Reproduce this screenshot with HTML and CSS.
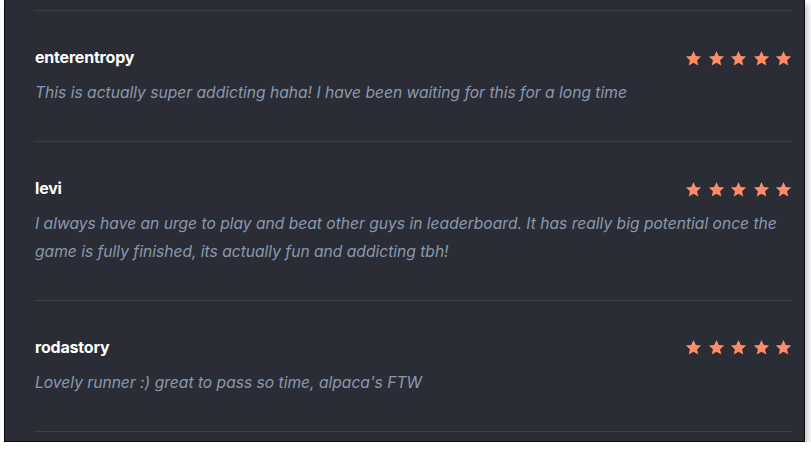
FILE: index.html
```html
<!DOCTYPE html>
<html>
<head>
<meta charset="utf-8">
<link rel="stylesheet" href="styles.css">
</head>
<body>
<div class="card">
  <div class="review">
    <div class="head">
      <span class="name">enterentropy</span>
      <span class="stars">
        <svg viewBox="0 0 24 24"><path d="M12 1.5l3.2 7 7.6.7-5.8 5.1 1.8 7.6L12 17.9l-6.8 4 1.8-7.6-5.8-5.1 7.6-.7z"/></svg>
        <svg viewBox="0 0 24 24"><path d="M12 1.5l3.2 7 7.6.7-5.8 5.1 1.8 7.6L12 17.9l-6.8 4 1.8-7.6-5.8-5.1 7.6-.7z"/></svg>
        <svg viewBox="0 0 24 24"><path d="M12 1.5l3.2 7 7.6.7-5.8 5.1 1.8 7.6L12 17.9l-6.8 4 1.8-7.6-5.8-5.1 7.6-.7z"/></svg>
        <svg viewBox="0 0 24 24"><path d="M12 1.5l3.2 7 7.6.7-5.8 5.1 1.8 7.6L12 17.9l-6.8 4 1.8-7.6-5.8-5.1 7.6-.7z"/></svg>
        <svg viewBox="0 0 24 24"><path d="M12 1.5l3.2 7 7.6.7-5.8 5.1 1.8 7.6L12 17.9l-6.8 4 1.8-7.6-5.8-5.1 7.6-.7z"/></svg>
      </span>
    </div>
    <p class="text">This is actually super addicting haha! I have been waiting for this for a long time</p>
  </div>
  <div class="review">
    <div class="head">
      <span class="name">levi</span>
      <span class="stars">
        <svg viewBox="0 0 24 24"><path d="M12 1.5l3.2 7 7.6.7-5.8 5.1 1.8 7.6L12 17.9l-6.8 4 1.8-7.6-5.8-5.1 7.6-.7z"/></svg>
        <svg viewBox="0 0 24 24"><path d="M12 1.5l3.2 7 7.6.7-5.8 5.1 1.8 7.6L12 17.9l-6.8 4 1.8-7.6-5.8-5.1 7.6-.7z"/></svg>
        <svg viewBox="0 0 24 24"><path d="M12 1.5l3.2 7 7.6.7-5.8 5.1 1.8 7.6L12 17.9l-6.8 4 1.8-7.6-5.8-5.1 7.6-.7z"/></svg>
        <svg viewBox="0 0 24 24"><path d="M12 1.5l3.2 7 7.6.7-5.8 5.1 1.8 7.6L12 17.9l-6.8 4 1.8-7.6-5.8-5.1 7.6-.7z"/></svg>
        <svg viewBox="0 0 24 24"><path d="M12 1.5l3.2 7 7.6.7-5.8 5.1 1.8 7.6L12 17.9l-6.8 4 1.8-7.6-5.8-5.1 7.6-.7z"/></svg>
      </span>
    </div>
    <p class="text">I always have an urge to play and beat other guys in leaderboard. It has really big potential once the game is fully finished, its actually fun and addicting tbh!</p>
  </div>
  <div class="review">
    <div class="head">
      <span class="name">rodastory</span>
      <span class="stars">
        <svg viewBox="0 0 24 24"><path d="M12 1.5l3.2 7 7.6.7-5.8 5.1 1.8 7.6L12 17.9l-6.8 4 1.8-7.6-5.8-5.1 7.6-.7z"/></svg>
        <svg viewBox="0 0 24 24"><path d="M12 1.5l3.2 7 7.6.7-5.8 5.1 1.8 7.6L12 17.9l-6.8 4 1.8-7.6-5.8-5.1 7.6-.7z"/></svg>
        <svg viewBox="0 0 24 24"><path d="M12 1.5l3.2 7 7.6.7-5.8 5.1 1.8 7.6L12 17.9l-6.8 4 1.8-7.6-5.8-5.1 7.6-.7z"/></svg>
        <svg viewBox="0 0 24 24"><path d="M12 1.5l3.2 7 7.6.7-5.8 5.1 1.8 7.6L12 17.9l-6.8 4 1.8-7.6-5.8-5.1 7.6-.7z"/></svg>
        <svg viewBox="0 0 24 24"><path d="M12 1.5l3.2 7 7.6.7-5.8 5.1 1.8 7.6L12 17.9l-6.8 4 1.8-7.6-5.8-5.1 7.6-.7z"/></svg>
      </span>
    </div>
    <p class="text">Lovely runner :) great to pass so time, alpaca's FTW</p>
  </div>
  <div class="end"></div>
</div>
</body>
</html>
```
FILE: styles.css
```css
html, body {
  margin: 0;
  padding: 0;
  background: #ffffff;
}
body {
  padding: 0 6px 0 4px;
  font-family: Inter, "Noto Sans", sans-serif;
}
.card {
  background: #2a2d35;
  border: 1px solid #0b0b0d;
  border-top: none;
  padding: 10px 12px 9px 29px;
  box-shadow: 3px 4px 6px rgba(0, 0, 0, 0.22);
}
.review {
  border-top: 1px solid #3c3f46;
  padding: 35px 0 34.5px;
}
.end {
  border-top: 1px solid #3c3f46;
}
.head {
  display: flex;
  justify-content: space-between;
  align-items: center;
  height: 22px;
  margin-bottom: 11px;
}
.name {
  color: #ffffff;
  font-weight: 700;
  font-size: 16px;
  letter-spacing: -0.2px;
  padding-left: 1px;
}
.stars {
  display: flex;
  gap: 5.5px;
  padding-top: 2px;
}
.stars svg {
  width: 17px;
  height: 17px;
  fill: #ff8c66;
}
.text {
  margin: 0;
  padding-left: 1px;
  color: #8b99af;
  font-style: italic;
  font-size: 15.6px;
  line-height: 27.5px;
}
```
